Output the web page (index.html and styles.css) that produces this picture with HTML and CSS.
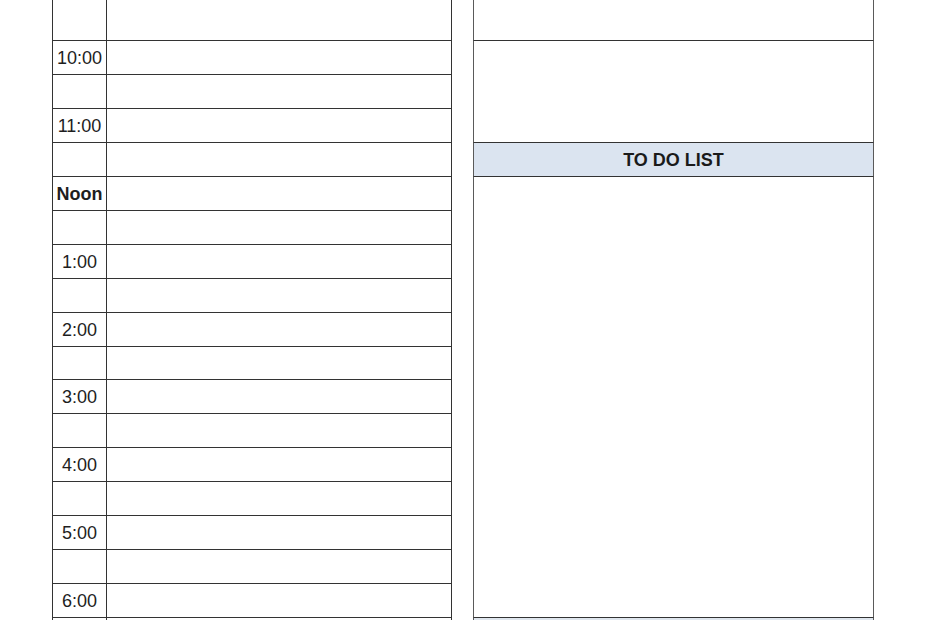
FILE: index.html
```html
<!DOCTYPE html>
<html>
<head>
<meta charset="utf-8">
<link rel="stylesheet" href="styles.css">
</head>
<body>
<div class="page">
  <div class="schedule">
    <div class="cell time"></div><div class="cell slot"></div>
    <div class="cell time">10:00</div><div class="cell slot"></div>
    <div class="cell time"></div><div class="cell slot"></div>
    <div class="cell time">11:00</div><div class="cell slot"></div>
    <div class="cell time"></div><div class="cell slot"></div>
    <div class="cell time bold">Noon</div><div class="cell slot"></div>
    <div class="cell time"></div><div class="cell slot"></div>
    <div class="cell time">1:00</div><div class="cell slot"></div>
    <div class="cell time"></div><div class="cell slot"></div>
    <div class="cell time">2:00</div><div class="cell slot"></div>
    <div class="cell time"></div><div class="cell slot"></div>
    <div class="cell time">3:00</div><div class="cell slot"></div>
    <div class="cell time"></div><div class="cell slot"></div>
    <div class="cell time">4:00</div><div class="cell slot"></div>
    <div class="cell time"></div><div class="cell slot"></div>
    <div class="cell time">5:00</div><div class="cell slot"></div>
    <div class="cell time"></div><div class="cell slot"></div>
    <div class="cell time">6:00</div><div class="cell slot"></div>
    <div class="cell time last"></div><div class="cell slot last"></div>
  </div>
  <div class="side">
    <div class="box box-top"></div>
    <div class="box box-notes"></div>
    <div class="box box-header">TO DO LIST</div>
    <div class="box box-list"></div>
    <div class="box box-next"></div>
  </div>
</div>
</body>
</html>
```
FILE: styles.css
```css
html, body {
  margin: 0;
  padding: 0;
  background: #ffffff;
  overflow: hidden;
}
body {
  width: 930px;
  height: 620px;
  font-family: "Liberation Sans", Arial, sans-serif;
  color: #1e1e1e;
}
.page {
  display: flex;
  align-items: flex-start;
  padding-left: 52px;
  gap: 21px;
}
.schedule {
  width: 400px;
  box-sizing: border-box;
  border-left: 1px solid #333;
  display: grid;
  grid-template-columns: 54px 345px;
  grid-template-rows: 41px repeat(9, 34px) 33px repeat(7, 34px) 2px;
}
.cell {
  box-sizing: border-box;
  border-right: 1px solid #333;
  border-bottom: 1px solid #333;
}
.cell.last {
  border-bottom: none;
}
.time {
  display: flex;
  align-items: center;
  justify-content: center;
  font-size: 18px;
  padding-top: 1px;
}
.bold {
  font-weight: bold;
}
.side {
  width: 401px;
  display: flex;
  flex-direction: column;
}
.box {
  box-sizing: border-box;
  border-left: 1px solid #5a5a5a;
  border-right: 1px solid #5a5a5a;
  border-bottom: 1px solid #333;
}
.box-top {
  height: 41px;
}
.box-notes {
  height: 102px;
}
.box-header {
  height: 34px;
  background: #dbe4f0;
  display: flex;
  align-items: center;
  justify-content: center;
  font-weight: bold;
  font-size: 18px;
  color: #1a1a1a;
  padding-top: 1px;
}
.box-list {
  height: 441px;
}
.box-next {
  height: 2px;
  background: #dfe6ee;
  border-bottom: none;
}
```
